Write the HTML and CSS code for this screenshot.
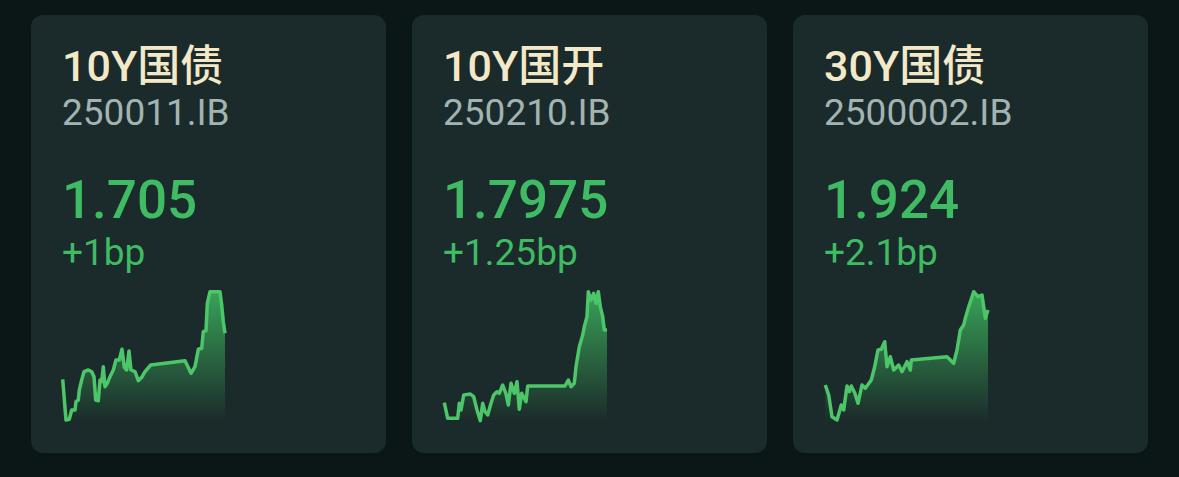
FILE: index.html
```html
<!DOCTYPE html>
<html>
<head lang="zh">
    <meta charset="UTF-8">
    <title>国债收益率</title>
    <link rel="stylesheet" href="styles.css">
</head>
<body>
    <div class="cards">
        <div class="card">
            <div class="name">10Y国债</div>
            <div class="code">250011.IB</div>
            <div class="yield">1.705</div>
            <div class="change">+1bp</div>
            <svg class="spark" width="300" height="140" viewBox="0 0 300 140">
                <defs>
                    <linearGradient id="g1" gradientUnits="userSpaceOnUse" x1="0" y1="0" x2="0" y2="137">
                        <stop offset="0" stop-color="#3fbf62" stop-opacity="0.85"/>
                        <stop offset="1" stop-color="#3fbf62" stop-opacity="0"/>
                    </linearGradient>
                </defs>
                <polygon fill="url(#g1)" points="2.7,94.3 6,135 9.3,134.3 11.7,125 15,125 16,116.7 18.3,115 19.3,105 21.7,95 24,86.7 28.3,85 31.7,86.7 34,91.7 35.7,115 38.3,115.7 40,95 41.7,96.7 43.3,81.7 45,101.7 47.3,98.3 50,91.7 53.3,85 56,75 59.3,75 62,64.3 64.3,82.3 66.7,85 69,66 71,85 75,86.7 78.3,95.7 81.7,92.3 85,86.7 90.7,80 125,75.7 131,88.3 135,81.7 138.3,64.3 141.7,63.3 143.3,46.7 146,45.7 147.3,18.3 150,6.7 160,6.7 161.7,20 163.3,36.7 165,48.3 165,137 2.7,137"/>
                <polyline class="line" points="2.7,94.3 6,135 9.3,134.3 11.7,125 15,125 16,116.7 18.3,115 19.3,105 21.7,95 24,86.7 28.3,85 31.7,86.7 34,91.7 35.7,115 38.3,115.7 40,95 41.7,96.7 43.3,81.7 45,101.7 47.3,98.3 50,91.7 53.3,85 56,75 59.3,75 62,64.3 64.3,82.3 66.7,85 69,66 71,85 75,86.7 78.3,95.7 81.7,92.3 85,86.7 90.7,80 125,75.7 131,88.3 135,81.7 138.3,64.3 141.7,63.3 143.3,46.7 146,45.7 147.3,18.3 150,6.7 160,6.7 161.7,20 163.3,36.7 165,48.3"/>
            </svg>
        </div>
        <div class="card">
            <div class="name">10Y国开</div>
            <div class="code">250210.IB</div>
            <div class="yield">1.7975</div>
            <div class="change">+1.25bp</div>
            <svg class="spark" width="300" height="140" viewBox="0 0 300 140">
                <defs>
                    <linearGradient id="g2" gradientUnits="userSpaceOnUse" x1="0" y1="0" x2="0" y2="137">
                        <stop offset="0" stop-color="#3fbf62" stop-opacity="0.85"/>
                        <stop offset="1" stop-color="#3fbf62" stop-opacity="0"/>
                    </linearGradient>
                </defs>
                <polygon fill="url(#g2)" points="3.3,117.7 6.7,133.3 16.7,133.3 18.3,118.3 20,125 22.7,110 29.3,109 32.7,111.7 36,125 39.3,135.7 41.7,118.3 44,126.7 46.7,130 50,118.3 52.7,110 56,106.7 58.3,108.3 61.7,100 65,109 67.3,120 70,98.3 73.3,108.3 76,96.7 78.3,124.3 80.7,108.3 85,116.7 86.7,101 124,101 127.3,95 130,101.7 133.3,98.3 135,81.7 138.3,61.7 141.7,50 143.3,41.7 146,31.7 147.3,6.7 150,15 152.7,8.3 155,18.3 157.3,6.7 159.3,21.7 161.7,31.7 163.3,45 166,45 166,137 3.3,137"/>
                <polyline class="line" points="3.3,117.7 6.7,133.3 16.7,133.3 18.3,118.3 20,125 22.7,110 29.3,109 32.7,111.7 36,125 39.3,135.7 41.7,118.3 44,126.7 46.7,130 50,118.3 52.7,110 56,106.7 58.3,108.3 61.7,100 65,109 67.3,120 70,98.3 73.3,108.3 76,96.7 78.3,124.3 80.7,108.3 85,116.7 86.7,101 124,101 127.3,95 130,101.7 133.3,98.3 135,81.7 138.3,61.7 141.7,50 143.3,41.7 146,31.7 147.3,6.7 150,15 152.7,8.3 155,18.3 157.3,6.7 159.3,21.7 161.7,31.7 163.3,45 166,45"/>
            </svg>
        </div>
        <div class="card">
            <div class="name">30Y国债</div>
            <div class="code">2500002.IB</div>
            <div class="yield">1.924</div>
            <div class="change">+2.1bp</div>
            <svg class="spark" width="300" height="140" viewBox="0 0 300 140">
                <defs>
                    <linearGradient id="g3" gradientUnits="userSpaceOnUse" x1="0" y1="0" x2="0" y2="137">
                        <stop offset="0" stop-color="#3fbf62" stop-opacity="0.85"/>
                        <stop offset="1" stop-color="#3fbf62" stop-opacity="0"/>
                    </linearGradient>
                </defs>
                <polygon fill="url(#g3)" points="3.3,100 6.7,110 10,131.7 15,135 19.3,120 21.7,125 25,101 27.3,106.7 29.3,101 32.7,107.7 36,118.3 40,100 43.3,103.3 49.3,95 52.7,81.7 56,65 59.3,64.3 62.7,56.7 65,81.7 68.3,71.7 71.7,85 76.7,80 80,86.7 85,76.7 88.3,85 89.3,75 125,71.7 131.7,78.3 135,65 138.3,45 141.7,40 143.3,33.3 146.7,21.7 151.7,6.7 156,11.7 160,10 163.3,33.3 166,25 166,137 3.3,137"/>
                <polyline class="line" points="3.3,100 6.7,110 10,131.7 15,135 19.3,120 21.7,125 25,101 27.3,106.7 29.3,101 32.7,107.7 36,118.3 40,100 43.3,103.3 49.3,95 52.7,81.7 56,65 59.3,64.3 62.7,56.7 65,81.7 68.3,71.7 71.7,85 76.7,80 80,86.7 85,76.7 88.3,85 89.3,75 125,71.7 131.7,78.3 135,65 138.3,45 141.7,40 143.3,33.3 146.7,21.7 151.7,6.7 156,11.7 160,10 163.3,33.3 166,25"/>
            </svg>
        </div>
    </div>
</body>
</html>
```

FILE: styles.css
```css
*{
    padding: 0;
    margin: 0;
    box-sizing: border-box;
}
body{
    background: #0b1717;
    font-family: Roboto, "Noto Sans CJK SC", sans-serif;
}
.cards{
    display: flex;
    gap: 26px;
    padding: 15px 0 0 31px;
}
.card{
    width: 355px;
    height: 438px;
    background: #1b2a2a;
    border-radius: 12px;
    padding: 27px 0 0 31px;
    display: flex;
    flex-direction: column;
}
.name{
    color: #f3e9c8;
    font-size: 43px;
    font-weight: 500;
    line-height: 48px;
}
.code{
    color: #a2b4b2;
    font-size: 37px;
    line-height: 42px;
    margin-top: 2px;
}
.yield{
    color: #3fbb63;
    font-size: 53px;
    font-weight: 500;
    line-height: 60px;
    margin-top: 36px;
}
.change{
    color: #3fbb63;
    font-size: 37px;
    line-height: 42px;
    margin-top: 2px;
}
.spark{
    display: block;
    margin-top: 11px;
    margin-left: -2px;
}
.spark .line{
    fill: none;
    stroke: #4cc668;
    stroke-width: 3.5;
    stroke-linejoin: round;
}
```
